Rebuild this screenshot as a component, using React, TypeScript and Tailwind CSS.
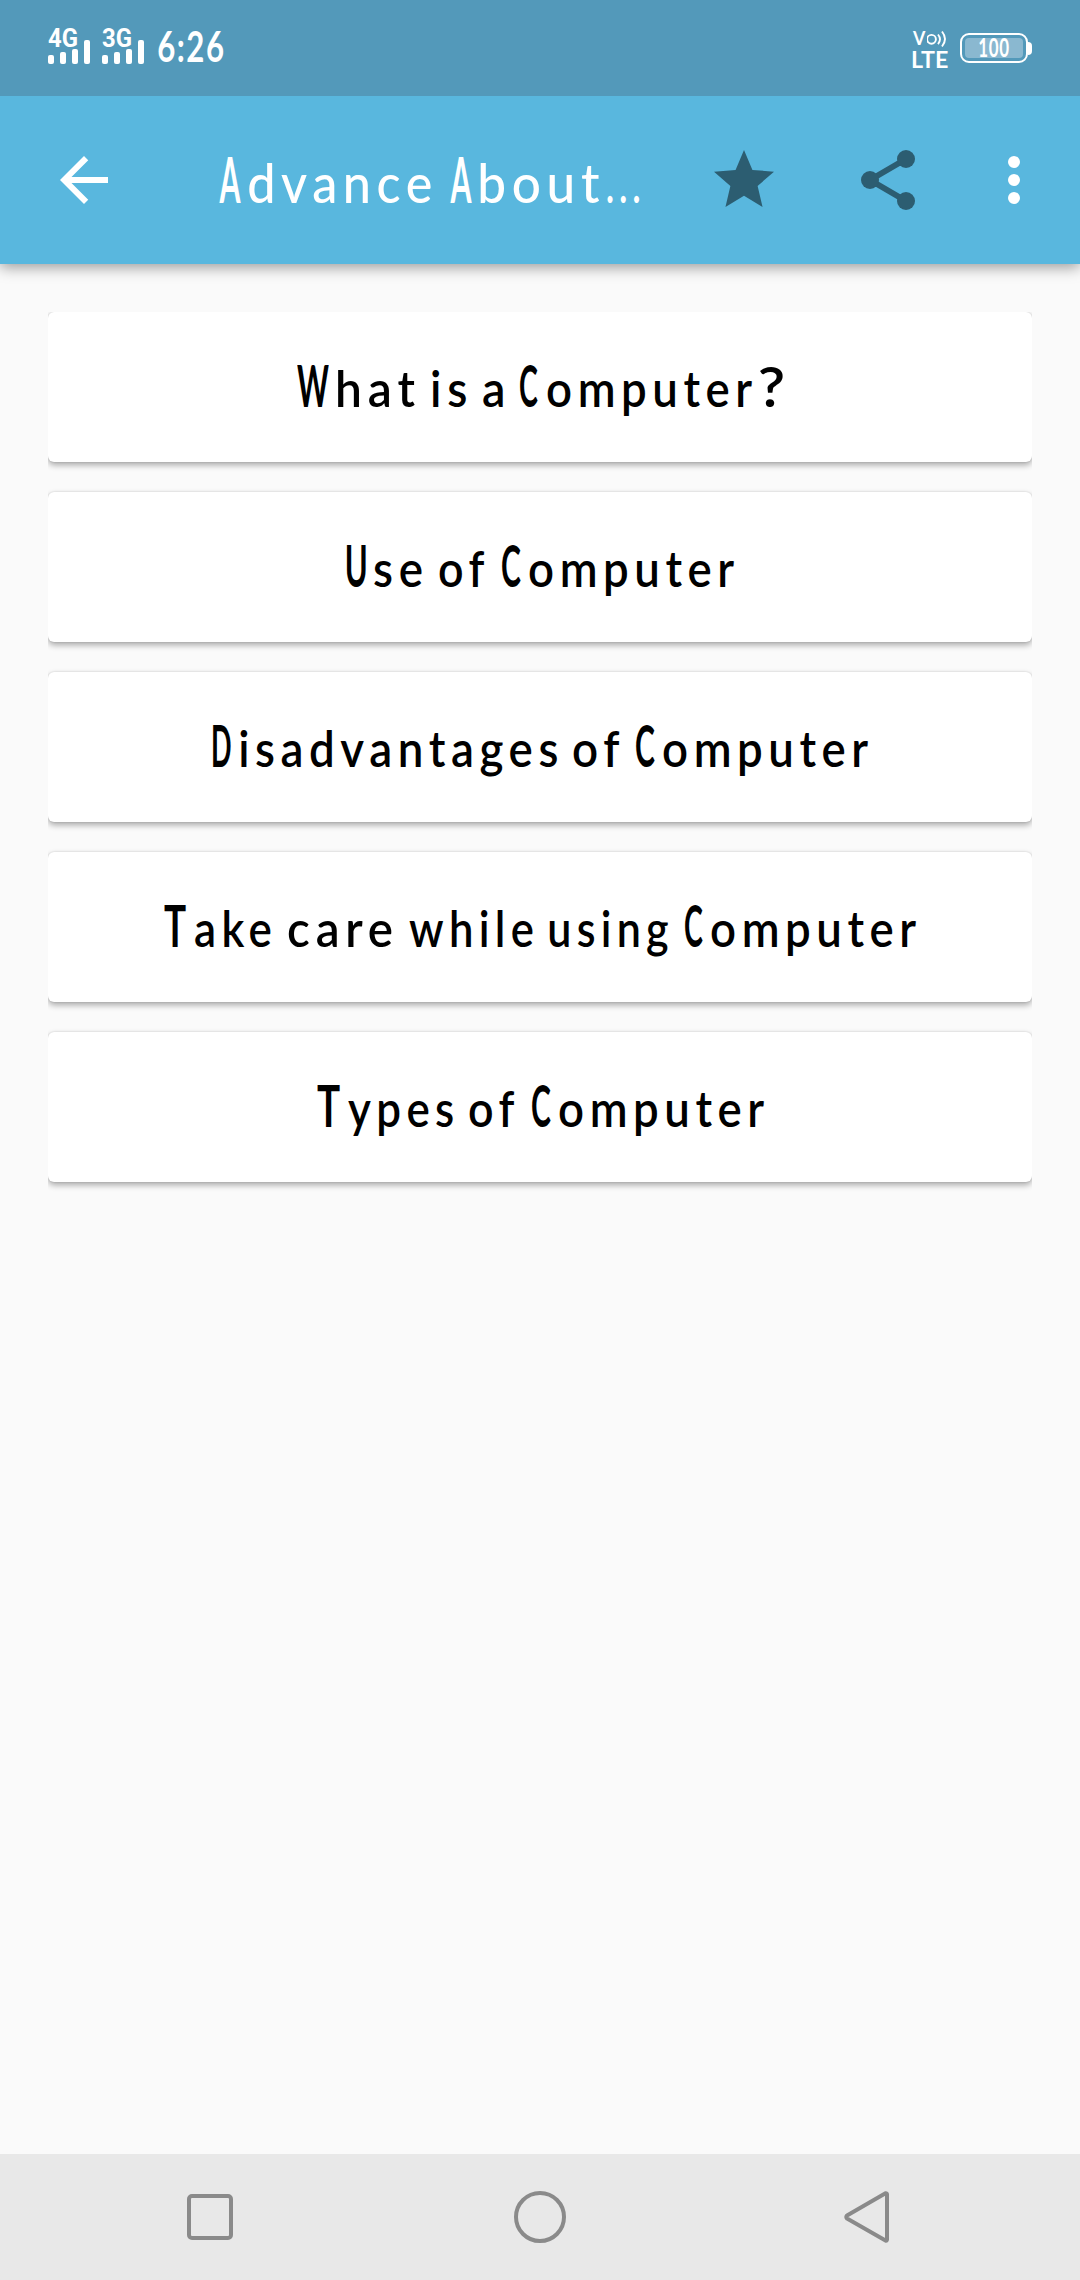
import { useLayoutEffect, useRef, useState } from "react";

/** Squeezes its text horizontally so that the visible ink is exactly `width` wide. */
function Fit({ text, width, className = "" }: { text: string; width: number; className?: string }) {
  const ref = useRef<HTMLSpanElement>(null);
  const [transform, setTransform] = useState("none");
  useLayoutEffect(() => {
    const el = ref.current;
    const ctx = document.createElement("canvas").getContext("2d");
    if (!el || !ctx) return;
    const style = getComputedStyle(el);
    ctx.font = `${style.fontWeight} ${style.fontSize} ${style.fontFamily}`;
    (ctx as any).letterSpacing = style.letterSpacing === "normal" ? "0px" : style.letterSpacing;
    const natural = ctx.measureText(text);
    const spacing = parseFloat(style.letterSpacing) || 0;
    const plain = natural.actualBoundingBoxRight + natural.actualBoundingBoxLeft;
    const ink = plain > natural.width ? plain - spacing : plain;
    const scale = width / ink;
    setTransform(`scaleX(${scale}) translateX(${natural.actualBoundingBoxLeft}px)`);
  }, [text, width]);
  return (
    <span className="inline-block whitespace-pre" style={{ width }}>
      <span ref={ref} className={`inline-block origin-left ${className}`} style={{ transform }}>
        {text}
      </span>
    </span>
  );
}

type Piece = [text: string, width: number, gapBefore?: number];

const isCapital = (t: string) => /^[A-Z]/.test(t);

function Line({ pieces, cap, low, mark = "" }: { pieces: Piece[]; cap: string; low: string; mark?: string }) {
  return (
    <div className="whitespace-nowrap leading-none text-[0px]">
      {pieces.map(([text, width, gap = 0], i) => (
        <span key={i}>
          <span className="inline-block whitespace-pre" style={{ width: gap }}>
            {gap > 12 ? " " : ""}
          </span>
          <Fit text={text} width={width} className={text === "?" ? mark : isCapital(text) ? cap : low} />
        </span>
      ))}
    </div>
  );
}

const topics: Piece[][] = [
  [["W", 32], ["hat", 77, 9], ["is", 34, 17], ["a", 20, 17], ["C", 18, 17], ["omputer", 205, 9], ["?", 23, 8]],
  [["U", 19], ["se", 48, 8], ["of", 46, 17], ["C", 19, 17], ["omputer", 205, 8]],
  [["D", 18], ["isadvantages", 317, 9], ["of", 47, 16], ["C", 19, 16], ["omputer", 205, 8]],
  [["T", 22], ["ake", 76, 9], ["care", 104, 17], ["while", 124, 17], ["using", 119, 16], ["C", 18, 17], ["omputer", 205, 8]],
  [["T", 23], ["ypes", 105, 8], ["of", 46, 16], ["C", 19, 17], ["omputer", 205, 8]],
];

function Signal({ label }: { label: string }) {
  return (
    <div className="relative h-[36px] w-[42px]">
      <div className="-mt-[2px] leading-none">
        <Fit text={label} width={29} className="text-[25px] font-bold font-[Roboto,sans-serif]" />
      </div>
      <div className="absolute inset-x-0 bottom-0 flex items-end gap-[6px]">
        <i className="h-[9px] w-[6px] rounded-[2px] bg-white" />
        <i className="h-[12px] w-[6px] rounded-[2px] bg-white" />
        <i className="h-[15px] w-[6px] rounded-[2px] bg-white" />
        <i className="h-[24px] w-[6px] rounded-[2px] bg-white" />
      </div>
    </div>
  );
}

function StatusBar() {
  return (
    <div className="relative z-10 flex h-[96px] shrink-0 items-start bg-[#5399ba] pl-[48px] pr-[48px] pt-[28px] text-white">
      <div className="flex gap-[12px]">
        <Signal label="4G" />
        <Signal label="3G" />
      </div>
      <div className="ml-[14px] -mt-[3px] leading-none">
        <Fit text="6:26" width={65} className="text-[42px] font-bold tracking-[2px]" />
      </div>
      <div className="ml-auto mr-[11px] w-[37px] pt-[1px]">
        <div className="flex h-[20px]">
          <div className="w-[15px] text-[19px] leading-[17px]">
            <Fit text="V" width={14} className="text-[19px] font-bold" />
          </div>
          <svg className="mt-px h-[18px] w-[22px] shrink-0" viewBox="0 0 22 18" fill="none" stroke="white" strokeWidth="1.9">
            <circle cx="4.5" cy="9.3" r="4.4" />
            <path d="M11 4.5q4 4.8 0 9.6M15 1.5q6 7.6 0 15" />
          </svg>
        </div>
        <div className="text-[23px] leading-[20px]">
          <Fit text="LTE" width={36} className="text-[23px] font-bold" />
        </div>
      </div>
      <div className="mt-[5px] flex items-center">
        <div className="h-[30px] w-[68px] rounded-[9px] border-2 border-white p-[3px]">
          <div className="flex h-[20px] justify-center rounded-[4px] bg-[#8ab8d0]">
            <div className="-mt-[4px] leading-none">
              <Fit text="100" width={30} className="text-[26px] font-bold tracking-[1px]" />
            </div>
          </div>
        </div>
        <div className="h-[13px] w-[4px] rounded-r-[4px] bg-white" />
      </div>
    </div>
  );
}

function AppBar() {
  return (
    <header className="relative flex h-[168px] shrink-0 items-center bg-[#59b7de] pl-[48px] pr-[30px] shadow-[0_3px_14px_rgba(0,0,0,0.4)]">
      <svg className="size-[72px] shrink-0" viewBox="0 0 24 24" fill="white">
        <path d="M20 11H7.83l5.59-5.59L12 4l-8 8 8 8 1.41-1.41L7.83 13H20v-2z" />
      </svg>
      <h1 className="ml-[99px] w-[489px] self-start pt-[51px] text-white">
        <Line
          pieces={[["A", 22], ["dvance", 182, 8], ["A", 22, 19], ["bout", 120, 8], ["...", 32, 7]]}
          cap="text-[63px] font-bold"
          low="text-[54px] font-medium tracking-[6px]"
        />
      </h1>
      <svg className="size-[72px] shrink-0" viewBox="0 0 24 24" fill="#2c5d71">
        <path d="M12 17.27 18.18 21l-1.64-7.03L22 9.24l-7.19-.61L12 2 9.19 8.63 2 9.24l5.46 4.73L5.82 21z" />
      </svg>
      <svg className="ml-[72px] size-[72px] shrink-0" viewBox="0 0 24 24" fill="#2c5d71" stroke="#2c5d71">
        <path d="M6 12 18 5M6 12l12 7" strokeWidth="2" fill="none" />
        <g stroke="none">
          <circle cx="18" cy="5" r="3" />
          <circle cx="6" cy="12" r="3" />
          <circle cx="18" cy="19" r="3" />
        </g>
      </svg>
      <svg className="ml-[54px] size-[72px] shrink-0" viewBox="0 0 24 24" fill="white">
        <circle cx="12" cy="6" r="2" />
        <circle cx="12" cy="12" r="2" />
        <circle cx="12" cy="18" r="2" />
      </svg>
    </header>
  );
}

export default function App() {
  return (
    <div className="flex h-[2280px] w-[1080px] flex-col bg-[#fafafa] font-[Lato,sans-serif]">
      <StatusBar />
      <AppBar />
      <main className="flex-1 px-[48px] pt-[48px]">
        <div className="flex flex-col gap-[30px] overflow-hidden pb-[20px]">
          {topics.map((pieces, i) => (
            <div
              key={i}
              className="flex h-[150px] justify-center rounded-[6px] bg-white pt-[45px] text-black shadow-[0_3px_6px_rgba(0,0,0,0.33),0_0_2px_rgba(0,0,0,0.15)]"
            >
              <Line
                pieces={pieces}
                cap="text-[57px] font-bold"
                low="text-[49px] font-semibold tracking-[6px]"
                mark="text-[55px] font-semibold"
              />
            </div>
          ))}
        </div>
      </main>
      <nav className="flex h-[126px] shrink-0 items-center justify-between bg-[#e8e8e8] pl-[187px] pr-[190px]">
        <div className="size-[46px] rounded-[5px] border-4 border-[#8a8a8a]" />
        <div className="ml-[3px] size-[52px] rounded-full border-4 border-[#8a8a8a]" />
        <svg className="h-[52px] w-[46px]" viewBox="0 0 46 52" fill="none" stroke="#8a8a8a" strokeWidth="4" strokeLinejoin="round">
          <path d="M41.5 2.2Q43 2 43 3.5V48.500Q43 50 41.500 49.500L3 27.500Q1.500 26 3 24.500Z" />
        </svg>
      </nav>
    </div>
  );
}
